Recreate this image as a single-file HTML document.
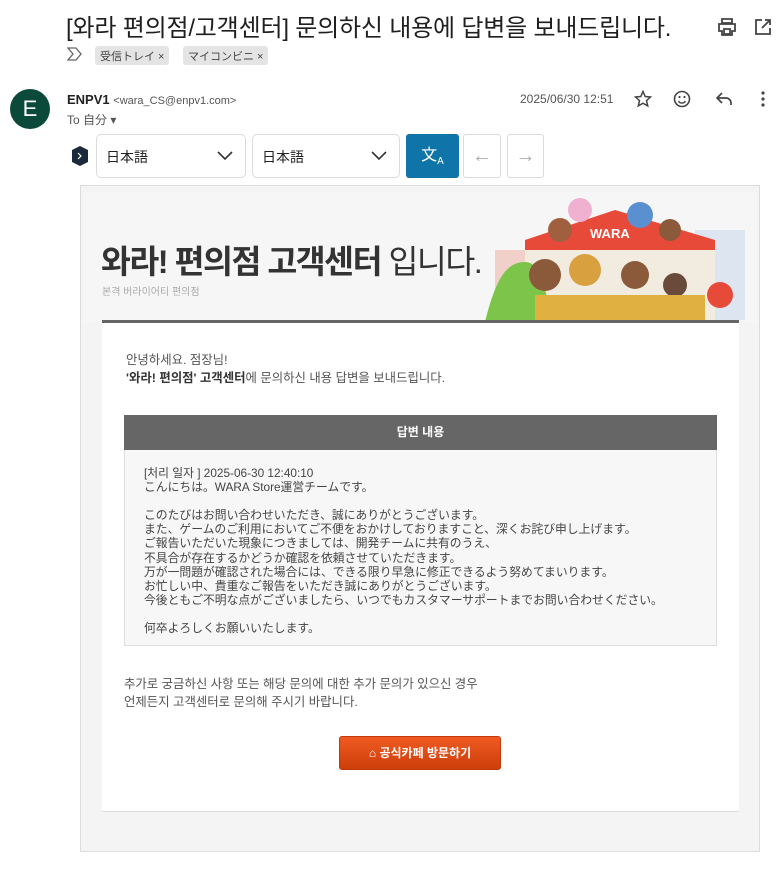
<!DOCTYPE html>
<html><head><meta charset="utf-8"><style>
*{margin:0;padding:0;box-sizing:border-box}
body{width:780px;height:870px;background:#fff;font-family:"Liberation Sans","Noto Sans CJK KR",sans-serif;position:relative;overflow:hidden;color:#222}
.a{position:absolute}
.jp{font-family:"Liberation Sans","Noto Sans CJK JP",sans-serif}
.chip{background:#e4e4e4;border-radius:3px;font-size:11px;color:#444;padding:2px 5px;height:19px}
.sel{border:1px solid #dadce0;border-radius:5px;background:#fff;height:44px;top:134px;font-size:14px}
.kr{font-family:"Liberation Sans","Noto Sans CJK KR",sans-serif}
.body div{height:14.1px;line-height:14.1px;overflow:visible}
</style></head><body>
<div class="a kr" style="left:66px;top:8px;font-size:24px;color:#1f1f1f;letter-spacing:-0.2px;white-space:nowrap">[와라 편의점/고객센터] 문의하신 내용에 답변을 보내드립니다.</div>
<svg class="a" style="left:717px;top:18px" width="20" height="18" viewBox="0 0 20 18"><path d="M5 1h10v4H5zM2 6h16v7h-3v4H5v-4H2z M7 11h6v5H7z" fill="none" stroke="#444" stroke-width="1.8"/></svg>
<svg class="a" style="left:754px;top:18px" width="18" height="18" viewBox="0 0 18 18"><path d="M8 2H2v14h14v-6M11 2h5v5M16 2l-8 8" fill="none" stroke="#444" stroke-width="1.8"/></svg>
<svg class="a" style="left:67px;top:47px" width="16" height="14"><path d="M1 1h8l5 6-5 6H1l5-6z" fill="none" stroke="#666" stroke-width="1.3"/></svg>
<div class="a chip jp" style="left:95px;top:46px">受信トレイ ×</div>
<div class="a chip jp" style="left:183px;top:46px">マイコンビニ ×</div>
<div class="a" style="left:10px;top:89px;width:40px;height:40px;border-radius:50%;background:#0b4a3a;color:#fff;font-size:22px;text-align:center;line-height:40px">E</div>
<div class="a" style="left:67px;top:92px;font-size:13px"><b>ENPV1</b> <span style="font-size:11px;color:#555">&lt;wara_CS@enpv1.com&gt;</span></div>
<div class="a jp" style="left:67px;top:111px;font-size:12px;color:#555">To 自分 ▾</div>
<div class="a" style="left:520px;top:92px;font-size:12px;color:#555">2025/06/30 12:51</div>
<svg class="a" style="left:634px;top:90px" width="18" height="18"><path d="M9 1.5l2.2 5 5.3.5-4 3.6 1.2 5.3L9 13.2 4.3 15.9l1.2-5.3-4-3.6 5.3-.5z" fill="none" stroke="#444" stroke-width="1.5"/></svg>
<svg class="a" style="left:673px;top:90px" width="18" height="18"><circle cx="9" cy="9" r="7.5" fill="none" stroke="#444" stroke-width="1.6"/><circle cx="6.5" cy="7" r="1.1" fill="#444"/><circle cx="11.5" cy="7" r="1.1" fill="#444"/><path d="M5.5 11a4 4 0 0 0 7 0" fill="none" stroke="#444" stroke-width="1.4"/></svg>
<svg class="a" style="left:715px;top:91px" width="18" height="16"><path d="M7 2L2 7l5 5M2 7h9a5 5 0 0 1 5 5v2" fill="none" stroke="#444" stroke-width="1.7"/></svg>
<svg class="a" style="left:760px;top:90px" width="6" height="18"><circle cx="3" cy="3" r="1.6" fill="#444"/><circle cx="3" cy="9" r="1.6" fill="#444"/><circle cx="3" cy="15" r="1.6" fill="#444"/></svg>
<svg class="a" style="left:72px;top:146px" width="16" height="20"><path d="M8 0l8 4v12l-8 4-8-4V4z" fill="#1b2a3a"/><path d="M6 7l3 3-3 3" stroke="#fff" stroke-width="1.2" fill="none"/></svg>
<div class="a sel jp" style="left:96px;width:150px"><span class="a" style="left:9px;top:12px">日本語</span><svg class="a" style="left:120px;top:16px" width="16" height="10"><path d="M1 1l7 7 7-7" fill="none" stroke="#333" stroke-width="1.6"/></svg></div>
<div class="a sel jp" style="left:252px;width:148px"><span class="a" style="left:9px;top:12px">日本語</span><svg class="a" style="left:118px;top:16px" width="16" height="10"><path d="M1 1l7 7 7-7" fill="none" stroke="#333" stroke-width="1.6"/></svg></div>
<div class="a jp" style="left:406px;top:134px;width:53px;height:44px;background:#0f75a8;border-radius:3px;color:#fff;font-size:16px;text-align:center;line-height:44px">文<sub style="font-size:10px">A</sub></div>
<div class="a" style="left:463px;top:134px;width:38px;height:44px;border:1px solid #dadce0;border-radius:3px;color:#aaa;font-size:20px;text-align:center;line-height:42px">←</div>
<div class="a" style="left:507px;top:134px;width:37px;height:44px;border:1px solid #dadce0;border-radius:3px;color:#aaa;font-size:20px;text-align:center;line-height:42px">→</div>

<div class="a" style="left:80px;top:185px;width:680px;height:667px;background:#f4f4f4;border:1px solid #ddd"></div>
<div class="a" style="left:84px;top:192px;width:672px;height:130px;background:#f6f6f6"></div>
<svg class="a" style="left:485px;top:190px" width="270" height="132" viewBox="0 0 270 132">
<rect x="210" y="40" width="50" height="90" fill="#dde6f0"/><rect x="10" y="60" width="30" height="70" fill="#f0d0c8"/>
<rect x="40" y="55" width="190" height="77" fill="#f2ece0"/><path d="M40 50l90-30 100 30v10H40z" fill="#e84a3a"/>
<text x="105" y="48" font-size="13" font-weight="bold" fill="#fff" font-family="Liberation Sans">WARA</text>
<path d="M0 132c10-40 20-60 40-60s20 40 30 60z" fill="#7cc44a"/>
<circle cx="60" cy="85" r="16" fill="#8a5a3a"/><circle cx="100" cy="80" r="16" fill="#d9a040"/><circle cx="150" cy="85" r="14" fill="#8a5a3a"/><circle cx="190" cy="95" r="12" fill="#6a4a3a"/><circle cx="235" cy="105" r="13" fill="#e84a3a"/>
<circle cx="75" cy="40" r="12" fill="#a06040"/><circle cx="95" cy="20" r="12" fill="#f0b0d0"/><circle cx="155" cy="25" r="13" fill="#5a90d0"/><circle cx="185" cy="40" r="11" fill="#8a5a3a"/>
<rect x="50" y="105" width="170" height="27" fill="#e0b040"/>
</svg>
<div class="a kr" style="left:101px;top:236px;font-size:32.5px;font-weight:bold;color:#333;letter-spacing:-1.5px;white-space:nowrap">와라! 편의점 고객센터 <span style="font-weight:normal">입니다.</span></div>
<div class="a kr" style="left:102px;top:283px;font-size:10px;color:#aaa">본격 버라이어티 편의점</div>
<div class="a" style="left:102px;top:320px;width:637px;height:3px;background:#666"></div>
<div class="a" style="left:102px;top:323px;width:637px;height:489px;background:#fff;border-bottom:1px solid #ddd"></div>
<div class="a kr" style="left:126px;top:351px;font-size:12.4px;color:#555;line-height:18px;white-space:nowrap">안녕하세요. 점장님!<br><b style="color:#333">'와라! 편의점' 고객센터</b>에 문의하신 내용 답변을 보내드립니다.</div>
<div class="a kr" style="left:124px;top:415px;width:593px;height:35px;background:#666;color:#fff;font-size:12px;font-weight:bold;text-align:center;line-height:35px">답변 내용</div>
<div class="a" style="left:124px;top:450px;width:593px;height:196px;background:#f7f7f7;border:1px solid #ddd;border-top:none"></div>
<div class="a jp body" style="left:144px;top:466px;font-size:11.8px;color:#444;white-space:nowrap">
<div>[처리 일자 ] 2025-06-30 12:40:10</div><div>こんにちは。WARA Store運営チームです。</div><div>&nbsp;</div><div>このたびはお問い合わせいただき、誠にありがとうございます。</div><div>また、ゲームのご利用においてご不便をおかけしておりますこと、深くお詫び申し上げます。</div><div>ご報告いただいた現象につきましては、開発チームに共有のうえ、</div><div>不具合が存在するかどうか確認を依頼させていただきます。</div><div>万が一問題が確認された場合には、できる限り早急に修正できるよう努めてまいります。</div><div>お忙しい中、貴重なご報告をいただき誠にありがとうございます。</div><div>今後ともご不明な点がございましたら、いつでもカスタマーサポートまでお問い合わせください。</div><div>&nbsp;</div><div>何卒よろしくお願いいたします。</div></div>
<div class="a kr" style="left:124px;top:675px;font-size:12.4px;color:#555;line-height:18px;white-space:nowrap">추가로 궁금하신 사항 또는 해당 문의에 대한 추가 문의가 있으신 경우<br>언제든지 고객센터로 문의해 주시기 바랍니다.</div>
<div class="a kr" style="left:339px;top:736px;width:162px;height:34px;background:linear-gradient(#f05a22,#cc3e0a);border:1px solid #c23a08;border-radius:3px;color:#fff;font-size:12px;font-weight:bold;text-align:center;line-height:32px">⌂ 공식카페 방문하기</div>
</body></html>
